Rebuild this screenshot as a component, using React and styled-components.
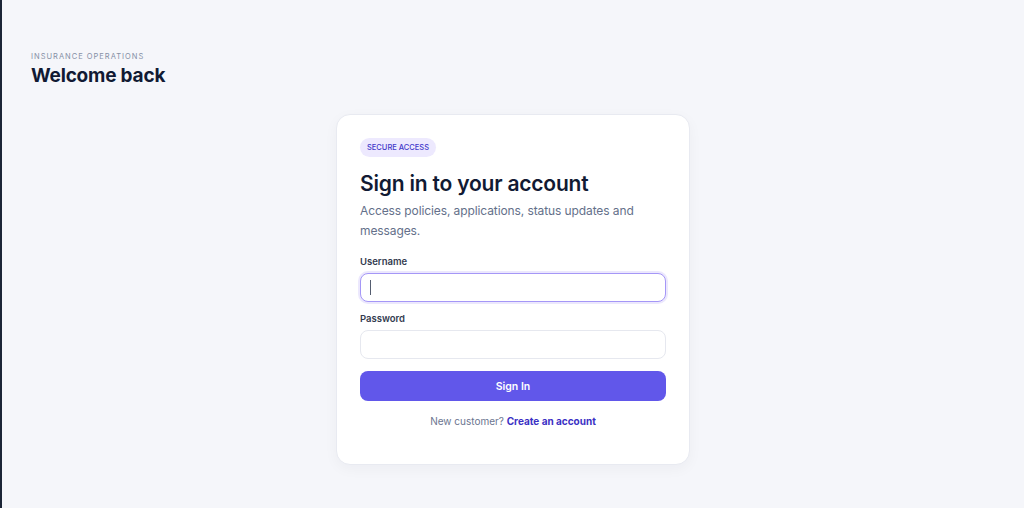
import styled, { createGlobalStyle } from 'styled-components';

const GlobalStyle = createGlobalStyle`
  html, body {
    margin: 0;
    padding: 0;
    background: #f5f6fa;
  }
  body {
    font-family: Inter, "Noto Sans", sans-serif;
    color: #111a33;
  }
  * { box-sizing: border-box; }
`;

const Page = styled.div`
  min-height: 508px;
  border-left: 2px solid #1c2536;
  padding: 52px 0 0 29px;
`;

const Header = styled.header`
  display: flex;
  flex-direction: column;
  gap: 3px;
`;

const Eyebrow = styled.span`
  font-size: 7.5px;
  letter-spacing: 1px;
  text-transform: uppercase;
  color: #8590a6;
`;

const PageTitle = styled.h1`
  margin: 0;
  font-size: 19px;
  font-weight: 700;
  letter-spacing: -0.2px;
  color: #111a33;
`;

const Center = styled.main`
  display: flex;
  justify-content: center;
  padding: 27px 29px 0 0;
`;

const Card = styled.section`
  width: 354px;
  background: #fff;
  border: 1px solid #e8eaf1;
  border-radius: 14px;
  box-shadow: 0 4px 14px rgba(20, 30, 60, 0.04);
  padding: 23px 23px 37px;
  display: flex;
  flex-direction: column;
`;

const Badge = styled.span`
  align-self: flex-start;
  display: inline-flex;
  align-items: center;
  height: 19px;
  background: #ede9fe;
  color: #4338ca;
  font-size: 7.5px;
  font-weight: 500;
  text-transform: uppercase;
  border-radius: 10px;
  padding: 0 7px;
`;

const Title = styled.h2`
  margin: 14px 0 0;
  font-size: 21px;
  font-weight: 600;
  letter-spacing: -0.2px;
  color: #111a33;
  line-height: 26px;
`;

const Subtitle = styled.p`
  margin: 4px 0 0;
  font-size: 12px;
  letter-spacing: -0.1px;
  line-height: 20px;
  color: #64708a;
`;

const Form = styled.form`
  display: flex;
  flex-direction: column;
  margin-top: 15px;
`;

const Label = styled.label`
  font-size: 9.5px;
  font-weight: 600;
  color: #333b4f;
  margin-bottom: 6px;
`;

const Input = styled.input`
  height: 29px;
  border-radius: 8px;
  border: 1px solid ${p => (p.$focused ? '#a597f7' : '#e6e8ef')};
  box-shadow: ${p => (p.$focused ? '0 0 0 2px #ece8fd' : 'none')};
  padding: 0 9px;
  font: 13px Inter, sans-serif;
  outline: none;
`;

const Caret = styled.span`
  position: absolute;
  left: 10px;
  top: 7px;
  width: 1px;
  height: 15px;
  background: #555d70;
`;

const Field = styled.div`
  position: relative;
  display: flex;
  flex-direction: column;
  margin-bottom: ${p => p.$gap || 0}px;
`;

const Button = styled.button`
  margin-top: 12px;
  height: 30px;
  border: none;
  border-radius: 8px;
  background: #6157ea;
  color: #fff;
  font: 600 10.5px Inter, sans-serif;
  cursor: pointer;
`;

const Footer = styled.p`
  margin: 14px 0 0;
  text-align: center;
  font-size: 10px;
  color: #6b7590;
`;

const Link = styled.a`
  color: #3b30c4;
  font-weight: 700;
  text-decoration: none;
`;

export default function App() {
  return (
    <>
      <GlobalStyle />
      <Page>
        <Header>
          <Eyebrow>Insurance Operations</Eyebrow>
          <PageTitle>Welcome back</PageTitle>
        </Header>
        <Center>
          <Card>
            <Badge>Secure Access</Badge>
            <Title>Sign in to your account</Title>
            <Subtitle>Access policies, applications, status updates and messages.</Subtitle>
            <Form onSubmit={e => e.preventDefault()}>
              <Label>Username</Label>
              <Field $gap={11}>
                <Input $focused />
                <Caret />
              </Field>
              <Label>Password</Label>
              <Input type="password" />
              <Button>Sign In</Button>
              <Footer>
                New customer? <Link href="#">Create an account</Link>
              </Footer>
            </Form>
          </Card>
        </Center>
      </Page>
    </>
  );
}
